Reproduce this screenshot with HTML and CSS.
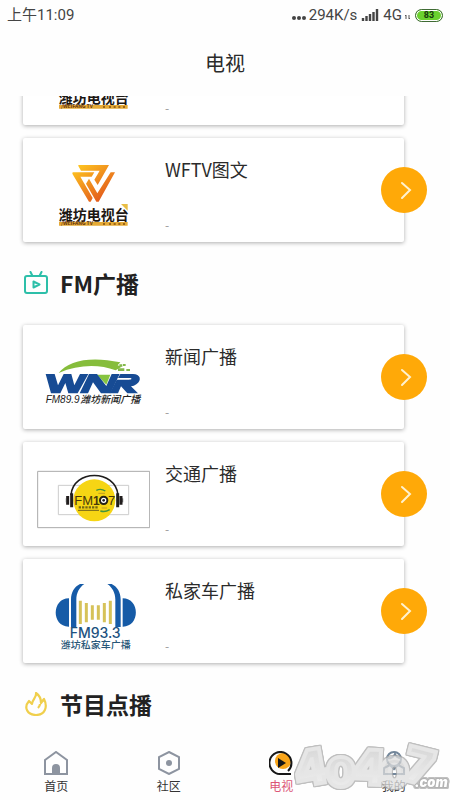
FILE: index.html
```html
<!DOCTYPE html>
<html lang="zh-CN">
<head>
<meta charset="utf-8">
<meta name="viewport" content="width=device-width, initial-scale=1">
<title>电视</title>
<link rel="stylesheet" href="styles.css">
</head>
<body>
<svg class="defs" width="0" height="0" aria-hidden="true">
  <defs>
    <linearGradient id="gold" gradientUnits="userSpaceOnUse" x1="60" y1="24" x2="140" y2="134"><stop offset="0" stop-color="#ffca20"/><stop offset="1" stop-color="#e2571c"/></linearGradient>
    <linearGradient id="silver" x1="0" y1="0" x2="0" y2="1"><stop offset="0" stop-color="#c4c4c4"/><stop offset="1" stop-color="#f0f0f0"/></linearGradient>
    <symbol id="wftv" viewBox="66 42 339 252">
      <g fill="url(#gold)" transform="translate(120 69)">
        <path d="M70 24h92l-34 60-10-16 16-27H78l-8-14z"/>
        <path d="M53 46h65l-8 13H76l37 64-6 11h-5L52 50z"/>
        <path d="M167 46h13l-49 88h-7L93 80l9-15 25 44z"/>
      </g>
      <path d="M318 210h20v20z" fill="#e8bd45"/>
      <text class="logo-text" x="131" y="258" font-size="42" font-weight="700" fill="#1c1713">潍坊电视台</text>
      <path d="M132 264h206v11h-206z" fill="#e5aa36"/>
      <text class="logo-text" x="138" y="274" font-size="15" font-weight="700" fill="#65340f">/WEIFANG TV</text>
      <path d="M264 270h6m12 0h6m8 0h6m8 0h6m8 0h6" stroke="#9b6518" stroke-width="6"/>
    </symbol>
  </defs>
</svg>
<header>
  <div class="status">
    <span>上午11:09</span>
    <div class="signals">
      <svg width="16" height="16" viewBox="0 0 16 16" aria-hidden="true"><g fill="#444"><circle cx="3" cy="11" r="2"/><circle cx="8" cy="11" r="2"/><circle cx="13" cy="11" r="2"/></g></svg>
      <span>294K/s</span>
      <svg class="bars" width="18" height="14" viewBox="0 0 18 14" aria-hidden="true"><path d="M2 10v3M5.500 8v5M9 6v7M12.500 4v9M16 1v12" stroke="#444" stroke-width="2.400"/></svg>
      <span>4G</span>
      <svg width="7" height="10" viewBox="0 0 7 10" aria-hidden="true"><path d="M2 9V5L1 6M5 5v4l1-1" stroke="#555" fill="none"/></svg>
      <span class="battery">83</span>
    </div>
  </div>
  <h1>电视</h1>
</header>
<main>
  <ul class="cards">
    <li class="card">
      <svg class="logo" aria-hidden="true"><use href="#wftv"/></svg>
      <div class="info"><p>-</p></div>
    </li>
    <li class="card">
      <svg class="logo" aria-hidden="true"><use href="#wftv"/></svg>
      <div class="info"><h3>WFTV图文</h3><p>-</p></div>
      <button class="go" aria-label="打开"><svg viewBox="0 0 46 46"><path d="M21 16l8 7-8 8"/></svg></button>
    </li>
  </ul>
  <h2>
    <svg width="24" height="24" viewBox="0 0 24 24" fill="none" stroke="#2dbfa9" stroke-width="2" stroke-linecap="round" stroke-linejoin="round" aria-hidden="true"><rect x="1" y="5" width="22" height="17" rx="2"/><path d="M6.500 1l2 4M17.500 1l-2 4M9.500 10.500v6l6-3z"/></svg>
    FM广播
  </h2>
  <ul class="cards">
    <li class="card">
      <svg class="logo" viewBox="66 45 339 252" aria-hidden="true">
        <path d="M131 159C160 120 230 108 316 127l-8 9 12 4-18 11C250 132 190 134 131 159z" fill="#86bd3c"/>
        <path d="M313 133h9v7h-9zM324 132h8v6h-8zM309 145h19v8h-19zM334 147h11v6h-11z" fill="#83b84b"/>
        <path d="M246 164h40l-12 30z" fill="#86c440"/>
        <g fill="#174b94">
          <path d="M92 162h27l10 34 17-34h23l9 34 17-34h25l-32 58h-28l-9-31-15 31h-28z"/>
          <path d="M222 162h24l28 36 16-36h24l-28 58h-28l-24-33-15 33h-25z"/>
          <path d="M316 162h38c22 0 28 18 10 31-5 4-10 5-16 6l21 21h-32l-19-21-9 21h-25l21-41h37c9 0 10-5 2-5h-35z"/>
        </g>
        <text class="latin" x="92" y="249" font-size="30" font-style="italic" fill="#222">FM89.9</text>
        <text class="logo-text" x="196" y="249" font-size="30" font-style="italic" font-weight="500" fill="#222">潍坊新闻广播</text>
      </svg>
      <div class="info"><h3>新闻广播</h3><p>-</p></div>
      <button class="go" aria-label="打开"><svg viewBox="0 0 46 46"><path d="M21 16l8 7-8 8"/></svg></button>
    </li>
    <li class="card">
      <svg class="logo" viewBox="66 36 339 252" aria-hidden="true">
        <path d="M68 94h336v169H68z" fill="#fff" stroke="#aaa" stroke-width="3"/>
        <path d="M130 136h211v88H130z" fill="none" stroke="#ccc" stroke-width="3"/>
        <circle cx="238" cy="181" r="63" fill="#f6d514"/>
        <path d="M168 165C174 87 302 87 309 165" fill="none" stroke="#1e1c1b" stroke-width="5"/>
        <path d="M158 168v26M170 160v42M308 160v42M318 168v26" stroke="#211d1d" stroke-width="9"/>
        <path d="M154 175v12M323 175v12" stroke="#444" stroke-width="3"/>
        <text class="latin" x="178" y="194" font-size="39" fill="#46370b">FM</text>
        <text class="latin" x="234" y="194" font-size="36" font-weight="700" fill="#46370b">1</text>
        <circle cx="266" cy="181" r="11" fill="#fff" stroke="#252015" stroke-width="6"/><circle cx="266" cy="181" r="4" fill="#222"/>
        <text class="latin" x="279" y="194" font-size="39" fill="#46370b">7</text>
        <path d="M244 151c10-5 18-4 27 2M256 213c10 3 19 2 28-4" fill="none" stroke="#43943d" stroke-width="4"/>
        <path d="M250 160h20M260 204h16" stroke="#c49c22" stroke-width="3"/>
        <path d="M191 202h59" stroke="#756714" stroke-width="7" stroke-dasharray="7 3"/><path d="M189 211h63" stroke="#71631a" stroke-width="3"/>
      </svg>
      <div class="info"><h3>交通广播</h3><p>-</p></div>
      <button class="go" aria-label="打开"><svg viewBox="0 0 46 46"><path d="M21 16l8 7-8 8"/></svg></button>
    </li>
    <li class="card">
      <svg class="logo" viewBox="66 42 339 252" aria-hidden="true">
        <g fill="#165ba7">
          <path d="M162 130v85C109 216 109 130 162 130zM323 130v85C376 216 376 130 323 130z"/>
          <path d="M168 216v-82c0-22 10-39 27-47h13c-15 10-24 27-24 47v82zM317 216v-82c0-22-10-39-27-47h-13c15 10 24 27 24 47v82z"/>
        </g>
        <path d="M196 137v70M214 144v58M232 151v43M250 151v43M268 144v58M286 137v70" stroke="#d6c259" stroke-width="9"/>
        <text class="din" x="164" y="250" font-size="42" fill="#1d527f">FM93.3</text>
        <text class="logo-text" x="137" y="281" font-size="30" font-weight="500" fill="#285778">潍坊私家车广播</text>
        <path d="M130 283h225v12H130z" fill="#fff"/>
      </svg>
      <div class="info"><h3>私家车广播</h3><p>-</p></div>
      <button class="go" aria-label="打开"><svg viewBox="0 0 46 46"><path d="M21 16l8 7-8 8"/></svg></button>
    </li>
  </ul>
  <h2>
    <svg width="24" height="24" viewBox="0 0 24 24" fill="none" stroke="#f0cf4c" stroke-width="2.200" stroke-linejoin="round" aria-hidden="true"><path d="M12 1c1 4-4 7-4 11L5 9c-6 7-1 14 7 14 9 0 12-8 8-16l-3 4c0-5-2-8-5-10z"/><path d="M16 12c0 2-1 3-2 4"/></svg>
    节目点播
  </h2>
</main>
<nav>
  <a href="#"><svg viewBox="0 0 24 24" fill="none" stroke="#8d94a0" stroke-width="2" aria-hidden="true"><path d="M1 9L12 1l11 8v14H1z"/><path d="M9 22v-5c0-4 6-4 6 0v5z" fill="#8d94a0"/></svg>首页</a>
  <a href="#"><svg viewBox="0 0 24 24" fill="none" stroke="#8d94a0" stroke-width="2" aria-hidden="true"><path d="M12 1l10 5v12l-10 5-10-5V6z"/><circle cx="12" cy="12" r="3" fill="#8d94a0" stroke="none"/></svg>社区</a>
  <a href="#" class="active"><svg viewBox="0 0 24 24" aria-hidden="true"><circle cx="14" cy="10" r="8" fill="#f9a519"/><path d="M19 20a11 11 0 1 0-7 3h10" fill="none" stroke="#171717" stroke-width="2"/><path d="M9 7v10l8-5z" fill="#171717"/></svg>电视</a>
  <a href="#"><svg viewBox="0 0 24 24" fill="none" stroke="#72869a" stroke-width="2" aria-hidden="true"><circle cx="12" cy="8" r="7"/><path d="M5 7c3 1 7-1 8-4 1 3 3 4 6 4M8 14l-6 3v6h20v-6l-6-3-4 4z"/></svg>我的</a>
  <svg class="watermark" viewBox="150 30 480 156" aria-hidden="true">
    <g class="digits">
      <text x="162" y="164" font-size="144" transform="rotate(-10 210 112)">4</text>
      <text x="259" y="172" font-size="123">0</text>
      <text x="336" y="163" font-size="144" transform="rotate(3 385 112)">4</text>
      <text x="421" y="171" font-size="120">0</text>
      <text x="494" y="162" font-size="144" transform="rotate(14 545 110)">7</text>
    </g>
    <text class="com" x="524" y="170" font-size="39">.com</text>
  </svg>
</nav>
</body>
</html>
```
FILE: styles.css
```css
* { box-sizing: border-box; margin: 0; padding: 0; }
body {
  display: flex;
  flex-direction: column;
  height: 100vh;
  background: #fefefe;
  color: #2b2b2b;
  font-family: "Noto Sans CJK SC", sans-serif;
}
.defs { position: absolute; }
.status {
  display: flex;
  justify-content: space-between;
  align-items: center;
  height: 30px;
  padding: 0 7px;
  color: #444;
  font: 15px/20px Roboto, "Noto Sans CJK SC", sans-serif;
}
.signals { display: flex; align-items: center; gap: 2px; }
.bars { margin: 0 2px; }
.battery {
  width: 28px;
  height: 13px;
  margin-left: 2px;
  border: 1px solid #3f6a34;
  border-radius: 7px;
  background: #6bd12f;
  box-shadow: inset 0 0 0 1px #fff;
  color: #173b0c;
  font-size: 9px;
  font-weight: 700;
  line-height: 11px;
  text-align: center;
}
h1 { font-size: 20px; font-weight: 400; line-height: 66px; text-align: center; }
main {
  display: flex;
  flex: 1;
  flex-direction: column;
  justify-content: flex-end;
  min-height: 0;
  overflow: hidden;
  padding: 0 46px 0 23px;
}
.cards { display: grid; gap: 13px; list-style: none; }
.card {
  position: relative;
  display: flex;
  gap: 15px;
  height: 104px;
  padding: 10px 14px;
  border-radius: 2px;
  background: #fff;
  box-shadow: 0 1px 4px rgba(0, 0, 0, .32);
}
.logo { flex: none; width: 113px; height: 84px; }
.logo-text { font-family: "Noto Sans CJK SC", sans-serif; }
.latin { font-family: "Liberation Sans", sans-serif; }
.din { font-family: Inter, sans-serif; font-weight: 500; }
.info { display: flex; flex-direction: column; }
h3 { font-size: 18px; font-weight: 400; line-height: 42px; }
.info p { margin-top: auto; color: #999; font-size: 12px; line-height: 14px; }
.go {
  position: absolute;
  top: 29px;
  right: -23px;
  width: 46px;
  height: 46px;
  border: 0;
  border-radius: 50%;
  background: #ffa908;
}
.go svg { display: block; fill: none; stroke: #fff2d0; stroke-width: 2; stroke-linecap: round; }
h2 {
  display: flex;
  flex: none;
  align-items: center;
  gap: 12px;
  height: 83px;
  padding: 0 0 2px 1px;
  color: #222;
  font-size: 23px;
  font-weight: 700;
}
nav { position: relative; display: grid; flex: none; grid-template-columns: repeat(4, 1fr); height: 54px; padding-top: 5px; }
nav a {
  display: flex;
  flex-direction: column;
  align-items: center;
  gap: 2px;
  color: #333;
  font-size: 12px;
  line-height: 18px;
  text-decoration: none;
}
nav a svg { width: 24px; height: 24px; }
nav .active { color: #dc5676; }
.watermark {
  position: absolute;
  right: 0;
  bottom: 8px;
  width: 160px;
  height: 52px;
  opacity: .75;
  pointer-events: none;
  filter: drop-shadow(1px 0 0 #aaa) drop-shadow(-1px 0 0 #aaa) drop-shadow(0 1px 0 #aaa) drop-shadow(0 -1px 0 #aaa);
}
.digits { fill: url(#silver); stroke: #dedede; stroke-width: 12; font-family: Inter, sans-serif; font-weight: 900; }
.com { fill: #fff; stroke: #999; stroke-width: 6; paint-order: stroke; font-family: Inter, sans-serif; font-style: italic; font-weight: 900; }
```
